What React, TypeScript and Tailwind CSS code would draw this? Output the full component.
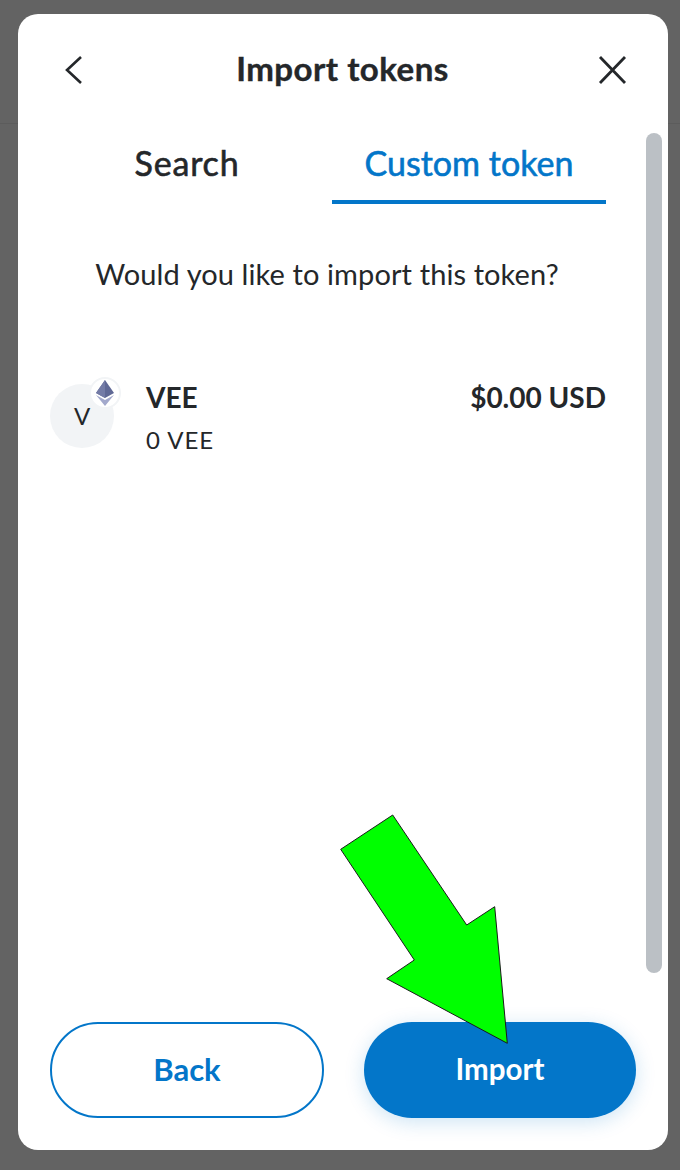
const font = "font-['Lato','Liberation_Sans',sans-serif]";

const EthBadge = () => (
	<span className="absolute left-[39px] top-[-7px] flex h-[32px] w-[32px] items-center justify-center rounded-full border-[2px] border-[#f2f4f6] bg-white">
		<svg width="18" height="26" viewBox="0 0 18 26">
			<path d="M9 0 L18 13 L9 18 L0 13 Z" fill="#5f6895" />
			<path d="M9 0 L9 18 L0 13 Z" fill="#737ba6" />
			<path d="M0 15 L9 20 L18 15 L9 26 Z" fill="#a3a9cc" />
		</svg>
	</span>
);

export default function App() {
	return (
		<div className={`relative h-[1170px] w-[680px] overflow-hidden bg-[#636363] ${font}`}>
			<div className="h-[124px] border-b border-[#5c5c5c]" />

			<div className="absolute left-[18px] top-[14px] flex h-[1136px] w-[650px] flex-col rounded-[20px] bg-white text-[#24272a]">
				<div className="flex h-[112px] items-center justify-between pl-[46px] pr-[41px]">
					<svg width="20" height="28" viewBox="0 0 20 28" fill="none" stroke="#24272a" strokeWidth="2.6">
						<path d="M17 1 L3 14 L17 27" />
					</svg>
					<h1 className="ml-[4px] mt-[-2px] text-[33px] font-bold tracking-[0.5px] [-webkit-text-stroke:0.4px_#24272a]">Import tokens</h1>
					<svg width="30" height="30" viewBox="0 0 30 30" fill="none" stroke="#24272a" strokeWidth="2.8">
						<path d="M3 2 L28 28 M28 2 L3 28" />
					</svg>
				</div>

				<div className="ml-[32px] flex w-[556px] gap-[8px]">
					<div className="flex h-[78px] w-[274px] items-center justify-center pb-[6px] text-[34px] tracking-[0.8px] [-webkit-text-stroke:0.6px_#24272a]">Search</div>
					<div className="flex h-[78px] w-[274px] items-center justify-center border-b-[4px] border-[#0376c9] pb-[2px] text-[34px] text-[#0376c9] [-webkit-text-stroke:0.6px_#0376c9]">
						Custom token
					</div>
				</div>

				<p className="ml-[-32px] mt-[52px] text-center text-[29px] leading-[36px] tracking-[0.1px]">Would you like to import this token?</p>

				<div className="ml-[32px] mt-[92px] flex w-[556px] justify-between">
					<div className="flex">
						<div className="relative flex h-[64px] w-[64px] items-center justify-center rounded-full bg-[#f2f4f6] text-[24px]">
							V
							<EthBadge />
						</div>
						<div className="ml-[32px] mt-[-5px]">
							<div className="text-[28px] font-bold leading-[36px]">VEE</div>
							<div className="mt-[9px] text-[24px] leading-[32px] tracking-[1px]">0 VEE</div>
						</div>
					</div>
					<div className="mt-[-5px] text-[28px] font-bold leading-[36px]">$0.00 USD</div>
				</div>

				<div className="mt-auto mb-[32px] flex justify-between pl-[32px] pr-[32px]">
					<button className="h-[96px] w-[274px] rounded-full border-[2px] border-[#0376c9] pb-[2px] text-[31px] font-bold text-[#0376c9]">Back</button>
					<button className="h-[96px] w-[272px] rounded-full bg-[#0376c9] pb-[2px] text-[29.5px] font-bold text-white shadow-[0_4px_20px_rgba(3,118,201,0.2)]">Import</button>
				</div>
			</div>

			<div className="absolute left-[646px] top-[133px] h-[840px] w-[16px] rounded-full bg-[#bbc0c5]" />

			<svg className="absolute left-0 top-0" width="680" height="1170" viewBox="0 0 680 1170">
				<polygon
					points="392.7,815 340.7,849.3 414.3,960 386.7,978.7 507.3,1043.3 494.7,906.7 466.7,925"
					fill="#00ff00"
					stroke="#1a1a1a"
					strokeWidth="1"
				/>
			</svg>
		</div>
	);
}
